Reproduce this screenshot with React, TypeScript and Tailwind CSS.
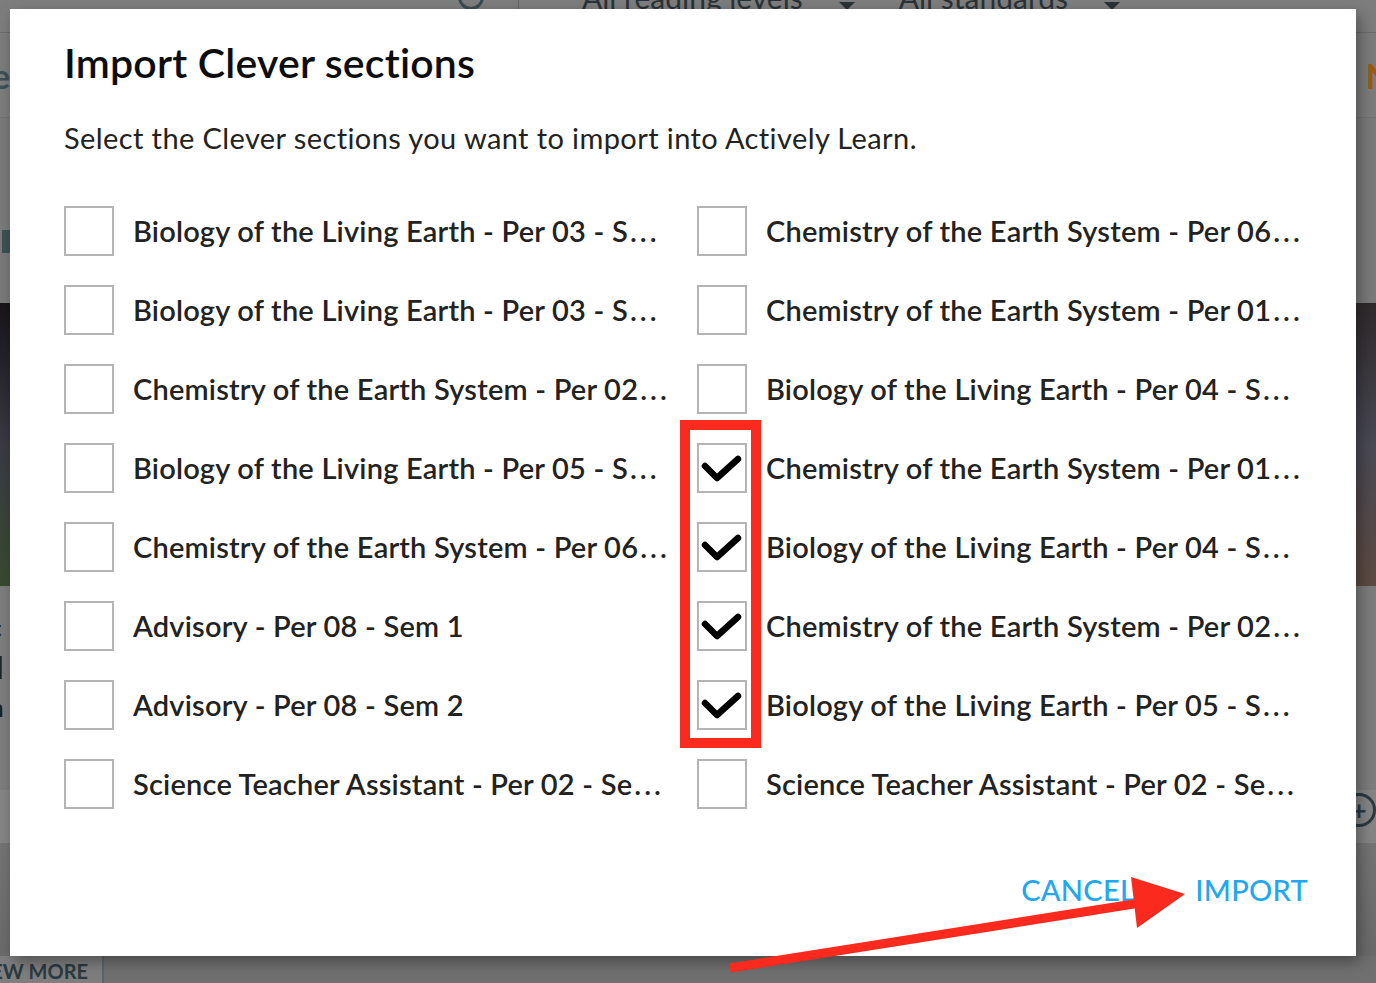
import React from "react";

const leftSections = [
  "Biology of the Living Earth - Per 03 - S…",
  "Biology of the Living Earth - Per 03 - S…",
  "Chemistry of the Earth System - Per 02…",
  "Biology of the Living Earth - Per 05 - S…",
  "Chemistry of the Earth System - Per 06…",
  "Advisory - Per 08 - Sem 1",
  "Advisory - Per 08 - Sem 2",
  "Science Teacher Assistant - Per 02 - Se…",
];

const rightSections = [
  "Chemistry of the Earth System - Per 06…",
  "Chemistry of the Earth System - Per 01…",
  "Biology of the Living Earth - Per 04 - S…",
  "Chemistry of the Earth System - Per 01…",
  "Biology of the Living Earth - Per 04 - S…",
  "Chemistry of the Earth System - Per 02…",
  "Biology of the Living Earth - Per 05 - S…",
  "Science Teacher Assistant - Per 02 - Se…",
];

const rightChecked = [false, false, false, true, true, true, true, false];

function CheckBox({ checked }: { checked: boolean }) {
  return (
    <div className="w-[50px] h-[50px] shrink-0 border-2 border-[#b4b4b4] bg-white flex items-center justify-center">
      {checked && (
        <svg width="46" height="46" viewBox="0 0 46 46">
          <polyline
            points="6,21 18,33 39,14"
            fill="none"
            stroke="#000"
            strokeWidth="6.5"
            strokeLinecap="round"
            strokeLinejoin="round"
          />
        </svg>
      )}
    </div>
  );
}

function SectionRow({ label, checked }: { label: string; checked: boolean }) {
  const clipped = label.endsWith("…");
  const body = clipped ? label.slice(0, -1) : label;
  return (
    <div className="flex items-center gap-[19px] pr-[12px] h-[50px]">
      <CheckBox checked={checked} />
      <span className="whitespace-nowrap overflow-hidden text-[29px] leading-[34px] font-semibold text-[#222] tracking-[0.2px]">
        {body}
        {clipped && <span className="tracking-[3px] ml-[2px]">...</span>}
      </span>
    </div>
  );
}

function Caret() {
  return (
    <span className="w-0 h-0 border-l-[8px] border-r-[8px] border-t-[8px] border-l-transparent border-r-transparent border-t-[#2b3236] mt-[16px]" />
  );
}

function BackgroundPage() {
  return (
    <div className="absolute inset-0 bg-[#7a7a7a] font-['Lato',sans-serif] flex flex-col">
      {/* header strip with search and filters */}
      <div className="h-[33px] shrink-0 bg-[#7d7d7d] border-b border-[#6c6c6c] flex items-start pl-[458px] overflow-hidden">
        <div className="w-[26px] h-[26px] mt-[-16px] rounded-full border-[3px] border-[#3a4a50]" />
        <div className="ml-[34px] h-[12px] w-px bg-[#666]" />
        <div className="ml-[63px] mt-[-25px] flex items-center gap-[36px] text-[30px] text-[#2b3236] whitespace-nowrap">
          <span>All reading levels</span>
          <Caret />
          <span className="ml-[8px]">All standards</span>
          <Caret />
        </div>
      </div>
      <div className="h-[85px] shrink-0 bg-[#7c7c7c] border-b border-[#727272] flex justify-between items-center overflow-hidden">
        <span className="ml-[-8px] text-[34px] font-bold text-[#3e4f55]">e</span>
        <span className="mr-[-16px] text-[34px] font-bold text-[#9a5a12]">N</span>
      </div>
      <div className="h-[185px] shrink-0 pt-[112px] pl-[2px]">
        <div className="w-[10px] h-[23px] bg-[#3e5153]" />
      </div>
      {/* card images */}
      <div className="h-[283px] shrink-0 flex justify-between">
        <div className="w-[12px] h-full bg-gradient-to-b from-[#17151a] via-[#3b3a44] to-[#394a30]" />
        <div className="w-[24px] h-full bg-gradient-to-b from-[#2f2a2c] via-[#4a4a55] to-[#5d4a42]" />
      </div>
      <div className="h-[204px] shrink-0 bg-[#7d7d7d] flex flex-col pt-[30px] text-[#1e2326] font-bold leading-none overflow-hidden">
        <span className="ml-[-10px] text-[24px] h-[36px]">c</span>
        <span className="ml-[-4px] text-[30px] h-[44px]">l</span>
        <span className="ml-[-10px] text-[24px]">n</span>
      </div>
      <div className="h-[53px] shrink-0 bg-[#858585] flex justify-end pt-[3px]">
        <div className="w-[34px] h-[34px] rounded-full border-[3px] border-[#2c3a40] flex items-center justify-center text-[#2c3a40] text-[26px] font-bold leading-none">
          +
        </div>
      </div>
      <div className="h-[113px] shrink-0 bg-gradient-to-b from-[#747474] to-[#6b6b6b]" />
      <div className="flex-1 flex bg-[#707070]">
        <div className="w-[104px] h-full bg-[#7e7e7e] border-r-2 border-[#5b666a] flex items-center justify-end pr-[14px] text-[20px] font-bold text-[#2b3a40] overflow-hidden whitespace-nowrap">
          VIEW MORE
        </div>
      </div>
    </div>
  );
}

export default function App() {
  return (
    <div className="relative w-[1376px] h-[983px] overflow-hidden font-['Lato',sans-serif]">
      <BackgroundPage />

      <div className="absolute left-[10px] top-[9px] w-[1346px] h-[947px] bg-white shadow-[4px_6px_14px_rgba(0,0,0,0.35)] pl-[54px] pr-[26px] pt-[30px]">
        <h1 className="text-[41px] leading-[48px] font-semibold text-[#0d0d0d] tracking-[0.2px]">Import Clever sections</h1>
        <p className="mt-[34px] text-[29px] leading-[34px] text-[#222] tracking-[0.4px]">
          Select the Clever sections you want to import into Actively Learn.
        </p>

        <div className="mt-[51px] grid grid-cols-[633px_633px] gap-y-[29px]">
          {leftSections.map((l, i) => (
            <React.Fragment key={i}>
              <SectionRow label={l} checked={false} />
              <SectionRow label={rightSections[i]} checked={rightChecked[i]} />
            </React.Fragment>
          ))}
        </div>

        <div className="mt-[64px] flex justify-end gap-[60px] pr-[22px]">
          <button className="text-[29px] leading-[34px] font-medium text-[#1fa8f1] tracking-[0.3px]">CANCEL</button>
          <button className="text-[29px] leading-[34px] font-medium text-[#1fa8f1] tracking-[0.3px]">IMPORT</button>
        </div>
      </div>

      {/* annotation: highlight around the checked boxes */}
      <div className="absolute left-[680px] top-[420px] w-[81px] h-[328px] border-[10px] border-[#fb2a1e]" />

      {/* annotation: arrow pointing at the import button */}
      <svg className="absolute inset-0 pointer-events-none" width="1376" height="983" viewBox="0 0 1376 983">
        <line x1="730" y1="968" x2="1140" y2="903" stroke="#fb2a1e" strokeWidth="9" />
        <polygon points="1131,877 1185,894 1137,928" fill="#fb2a1e" />
      </svg>
    </div>
  );
}
